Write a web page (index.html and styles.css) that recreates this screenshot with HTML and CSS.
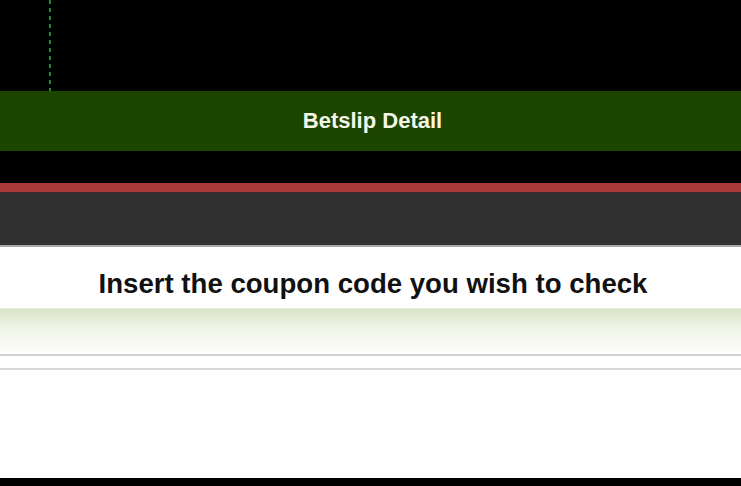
FILE: index.html
```html
<!DOCTYPE html>
<html lang="en">
<head>
    <meta charset="UTF-8">
    <meta name="viewport" content="width=device-width, initial-scale=1.0">
    <title>Betslip Detail</title>
    <link rel="stylesheet" href="styles.css">
</head>
<body>
    <!-- Top area with dotted guide -->
    <div class="top-area">
        <div class="dotted-line"></div>
    </div>

    <!-- Title bar -->
    <div class="title-bar">Betslip Detail</div>

    <div class="black-gap"></div>
    <div class="red-strip"></div>
    <div class="dark-bar"></div>

    <!-- Coupon panel -->
    <div class="coupon-panel">
        <h2 class="coupon-title">Insert the coupon code you wish to check</h2>
        <div class="coupon-input-row"></div>
        <div class="coupon-spacer"></div>
        <div class="coupon-body"></div>
    </div>
</body>
</html>
```

FILE: styles.css
```css
/* General Reset */
* {
    margin: 0;
    padding: 0;
    box-sizing: border-box;
}

body, html {
    height: 100%;
    font-family: 'Liberation Sans', Arial, sans-serif;
}

body {
    background-color: #000;
    overflow: hidden;
}

/* Top black area */
.top-area {
    height: 91px;
}

.dotted-line {
    width: 2px;
    height: 91px;
    margin-left: 49px;
    background-image: linear-gradient(to bottom, #1f8a2a 0, #1f8a2a 4px, transparent 4px);
    background-size: 2px 8px;
}

/* Title bar */
.title-bar {
    height: 60px;
    background-color: #1c4500;
    color: #f4f6e8;
    font-size: 22px;
    font-weight: bold;
    display: flex;
    align-items: center;
    justify-content: center;
    padding-left: 4px;
}

.black-gap {
    height: 32px;
}

.red-strip {
    height: 10px;
    background-color: #aa3a3a;
    border-bottom: 1px solid #3a2a2a;
}

.dark-bar {
    height: 54px;
    background-color: #313131;
    border-bottom: 2px solid #a8a8a8;
}

/* Coupon panel */
.coupon-panel {
    background-color: #fff;
}

.coupon-title {
    height: 61px;
    display: flex;
    align-items: center;
    justify-content: center;
    font-size: 27.6px;
    font-weight: bold;
    color: #111;
    padding-top: 12px;
    padding-left: 5px;
}

.coupon-input-row {
    height: 48px;
    background: linear-gradient(to bottom, #dbe5c8 0, #f2f6ea 50%, #fdfdfb 100%);
    border-top: 1px solid #e8ecdf;
    border-bottom: 2px solid #d2d2d2;
}

.coupon-spacer {
    height: 14px;
    border-bottom: 2px solid #d8d8d8;
}

.coupon-body {
    height: 108px;
    background-color: #fefefe;
}
```
